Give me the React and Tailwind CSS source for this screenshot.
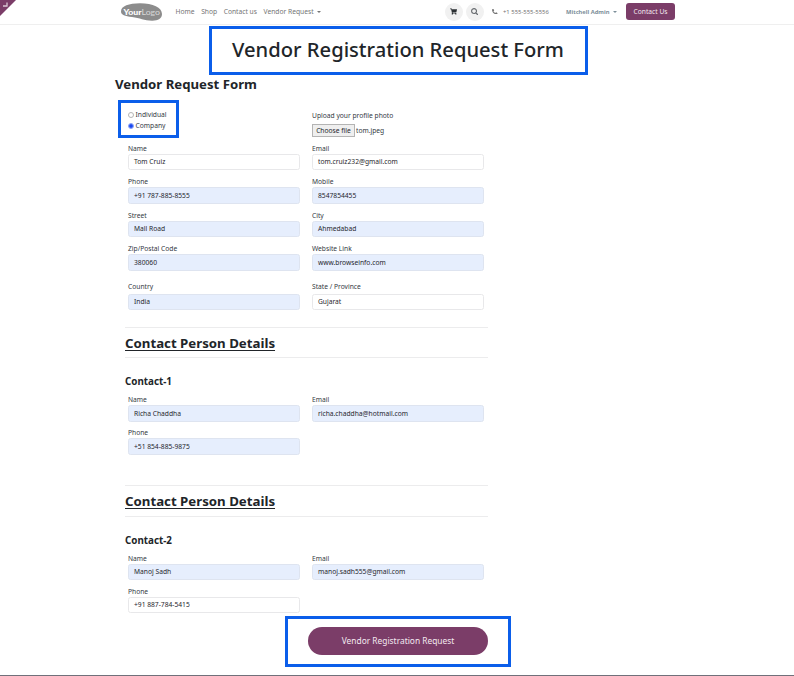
import { FaShoppingCart, FaSearch, FaPhoneAlt } from "react-icons/fa";

function Caret({ className = "" }) {
  return (
    <span
      className={`block h-0 w-0 border-x-2 border-t-2 border-x-transparent ${className}`}
    />
  );
}

function Field({ label, value, filled = false, className = "", height = "h-4" }) {
  return (
    <label className={`flex w-[172px] flex-col ${className}`}>
      <span className="h-3 leading-[13px] whitespace-nowrap">{label}</span>
      <span
        className={`flex items-center rounded-[2.5px] border px-[5px] pt-px text-[#1f262d] ${height} ${
          filled ? "border-[#dee4f0] bg-[#e6eefd]" : "border-[#e8e8ea] bg-white"
        }`}
      >
        {value}
      </span>
    </label>
  );
}

function Row({ children, className = "" }) {
  return <div className={`ml-[13px] flex gap-3 ${className}`}>{children}</div>;
}

function SectionTitle({ className = "" }) {
  return (
    <div
      className={`ml-[10px] flex w-[363px] items-center border-y border-[#ececed] pt-[2px] ${className}`}
    >
      <h3 className="text-[13.25px] leading-none font-bold underline decoration-[1.3px] underline-offset-[1.5px]">
        Contact Person Details
      </h3>
    </div>
  );
}

function Logo() {
  return (
    <svg className="ml-[121px] h-[18px] w-[41px]" viewBox="0 0 41 18">
      <path
        d="M0 8.500C0 3 8 .3 19 .3 32 .3 41 4.500 41 11c0 4.600-4 6.800-10 6.700C23 17.500 19 15 11 14 4 13.200 0 12 0 8.500Z"
        fill="#8c8c8c"
      />
      <text x="2.500" y="11.600" fontFamily="Lato, sans-serif" fontSize="8.300" fontWeight="900" fill="#fff" textLength="18" lengthAdjust="spacingAndGlyphs">
        Your
      </text>
      <text x="20.500" y="11.600" fontFamily="Lato, sans-serif" fontSize="8.300" fontWeight="400" fill="#d8d8d8" textLength="18.500" lengthAdjust="spacingAndGlyphs">
        Logo
      </text>
    </svg>
  );
}

function Header() {
  return (
    <header className="relative flex h-[25px] items-center border-b border-[#efefef] pb-px text-[6.7px] text-[#747474]">
      <svg className="absolute top-0 left-0 h-4 w-4" viewBox="0 0 16 16">
        <path d="M0 0H16L0 16Z" fill="#7b3d68" />
        <path d="M7 2.500v3.500H3" fill="none" stroke="#d9c6d3" strokeWidth="1.300" />
      </svg>
      <Logo />
      <nav className="ml-[13.5px] flex items-center gap-[6.6px] pt-[2px] whitespace-nowrap">
        <a>Home</a>
        <a>Shop</a>
        <a>Contact us</a>
        <a className="flex items-center gap-[3px]">
          Vendor Request <Caret className="border-t-[#747474]" />
        </a>
      </nav>
      <div className="ml-auto flex items-center pr-[119px] whitespace-nowrap">
        <span className="flex h-[18px] w-[18px] items-center justify-center rounded-full bg-[#f1f1f1]">
          <FaShoppingCart className="h-[7px] w-[7px] text-[#2b2f33]" />
        </span>
        <span className="ml-[3px] flex h-[18px] w-[18px] items-center justify-center rounded-full bg-[#f1f1f1]">
          <FaSearch className="h-[7.5px] w-[7.5px] text-[#6a6e72]" />
        </span>
        <FaPhoneAlt className="ml-[8.5px] h-[5.5px] w-[5.5px] text-[#747474]" />
        <span className="ml-[5.5px] w-[46px] pt-[2px] text-[5.9px]">+1 555-555-5556</span>
        <span className="ml-[17px] w-[44px] pt-[2px] text-[5.75px] font-bold text-[#7d8f9a]">Mitchell Admin</span>
        <Caret className="ml-[2.5px] border-t-[#7d8f9a]" />
        <button className="ml-[9.5px] h-[17px] w-[49px] rounded-[3px] bg-[#7b3d68] pt-px text-[6.7px] leading-none text-[#f3e9f0]">
          Contact Us
        </button>
      </div>
    </header>
  );
}

function Radio({ checked, label }) {
  return (
    <label className="flex h-[10.5px] items-center gap-[1.5px]">
      <span
        className={`flex h-[6px] w-[6px] items-center justify-center rounded-full border ${
          checked ? "border-[#7d98f7]" : "border-[#b5b5b5]"
        }`}
      >
        {checked && <span className="h-[4px] w-[4px] shrink-0 rounded-full bg-[#1a48f0]" />}
      </span>
      <span className="pt-px">{label}</span>
    </label>
  );
}

export default function App() {
  return (
    <div className="flex h-[676px] w-[794px] flex-col overflow-hidden border-b border-[#70707a] bg-white font-['Noto_Sans',sans-serif] text-[6.7px] leading-none text-[#33393f]">
      <Header />
      <div className="mt-px ml-[209px] flex h-[49px] w-[379px] items-center justify-center border-3 border-[#0b5eea] pr-px pb-[2px]">
        <h1 className="text-[20.16px] leading-none font-medium text-[#212529]">
          Vendor Registration Request Form
        </h1>
      </div>

      <main className="ml-[115px] flex flex-col">
        <h2 className="flex h-[21px] items-center pb-px text-[13.2px] font-bold text-[#212529]">
          Vendor Request Form
        </h2>

        <div className="mt-1 ml-[3px] flex">
          <div className="flex h-[38px] w-[61px] flex-col justify-center border-3 border-[#0b5eea] pt-[3px] pl-[7px]">
            <Radio label="Individual" />
            <Radio checked label="Company" />
          </div>
          <div className="ml-[133px] flex flex-col pt-[9px]">
            <span className="h-[15px] leading-[13px]">Upload your profile photo</span>
            <span className="flex items-center gap-px">
              <span className="flex h-[13px] w-[43px] items-center justify-center border border-[#b4b4b4] bg-[#efefef] pt-px text-[#1f262d]">
                Choose file
              </span>
              <span className="pt-px">tom.jpeg</span>
            </span>
          </div>
        </div>

        <Row className="mt-1">
          <Field label="Name" value="Tom Cruiz" />
          <Field label="Email" value="tom.cruiz232@gmail.com" />
        </Row>
        <Row className="mt-[5px]">
          <Field label="Phone" value="+91 787-885-8555" filled height="h-[17px]" />
          <Field label="Mobile" value="8547854455" filled height="h-[17px]" />
        </Row>
        <Row className="mt-[5px]">
          <Field label="Street" value="Mall Road" filled />
          <Field label="City" value="Ahmedabad" filled />
        </Row>
        <Row className="mt-[5px]">
          <Field label="Zip/Postal Code" value="380060" filled height="h-[17px]" />
          <Field label="Website Link" value="www.browseinfo.com" filled height="h-[17px]" />
        </Row>
        <Row className="mt-[9px]">
          <Field label="Country" value="India" filled height="mt-[2px] h-4" />
          <Field label="State / Province" value="Gujarat" height="mt-[2px] h-4" />
        </Row>

        <SectionTitle className="mt-[17px] h-[31px] text-[#212529]" />
        <h4 className="mt-[17px] ml-[10px] h-[13px] text-[9.8px] leading-[13px] font-bold text-[#212529]">
          Contact-1
        </h4>
        <Row className="mt-[5px]">
          <Field label="Name" value="Richa Chaddha" filled height="h-[17px]" />
          <Field label="Email" value="richa.chaddha@hotmail.com" filled height="h-[17px]" />
        </Row>
        <Row className="mt-1">
          <Field label="Phone" value="+51 854-885-9875" filled height="h-[17px]" />
        </Row>

        <SectionTitle className="mt-[30px] h-[32px] text-[#212529]" />
        <h4 className="mt-[17px] ml-[10px] h-[13px] text-[9.8px] leading-[13px] font-bold text-[#212529]">
          Contact-2
        </h4>
        <Row className="mt-[5px]">
          <Field label="Name" value="Manoj Sadh" filled />
          <Field label="Email" value="manoj.sadh555@gmail.com" filled />
        </Row>
        <Row className="mt-[5px]">
          <Field label="Phone" value="+91 887-784-5415" />
        </Row>
      </main>

      <div className="mt-[3px] ml-[285px] flex h-[51px] w-[226px] items-center justify-center border-3 border-[#0b5eea] pb-px">
        <button className="h-7 w-[180px] rounded-full bg-[#7b3d68] pt-px text-[8.4px] leading-none text-[#f3e9f0]">
          Vendor Registration Request
        </button>
      </div>
    </div>
  );
}
